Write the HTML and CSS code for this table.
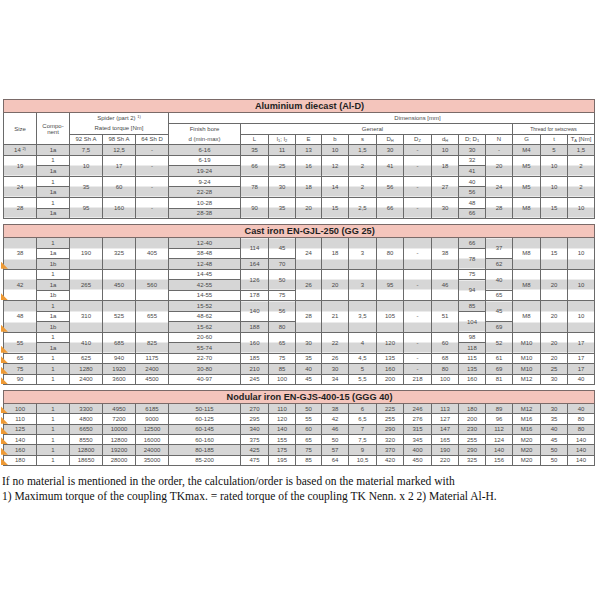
FILE: index.html
```html
<!DOCTYPE html>
<html>
<head>
<meta charset="utf-8">
<title>Coupling dimensions</title>
<link rel="stylesheet" href="styles.css">
</head>
<body>
<div class="page">
<table class="t sec-a">
<colgroup>
<col class="c33"><col class="c33"><col class="c33"><col class="c33"><col class="c33"><col class="c72"><col class="c28"><col class="c27"><col class="c26"><col class="c27"><col class="c28"><col class="c27"><col class="c28"><col class="c27"><col class="c27"><col class="c27"><col class="c28"><col class="c27"><col class="c27">
</colgroup>
<tr class="title"><td colspan="19">Aluminium diecast (Al-D)</td></tr>
<tr class="h1"><td rowspan="3">Size</td><td rowspan="3">Compo-<br>nent</td><td colspan="3" rowspan="2" class="two">Spider (part 2) <sup>1)</sup><br>Rated torque [Nm]</td><td colspan="14" class="dim">Dimensions [mm]</td></tr>
<tr class="h2"><td rowspan="2" class="two">Finish bore<br>d (min-max)</td><td colspan="10" class="gen">General</td><td colspan="3" class="thr">Thread for setscrews</td></tr>
<tr class="h3"><td>92 Sh A</td><td>98 Sh A</td><td>64 Sh D</td><td>L</td><td>l<sub>1</sub>; l<sub>2</sub></td><td>E</td><td>b</td><td>s</td><td>D<sub>H</sub></td><td>D<sub>Z</sub></td><td>d<sub>H</sub></td><td>D; D<sub>1</sub></td><td>N</td><td>G</td><td>t</td><td>T<sub>A</sub> [Nm]</td></tr>

<tr class="g"><td>14 <sup>2)</sup></td><td>1a</td><td>7,5</td><td>12,5</td><td>-</td><td>6-16</td><td>35</td><td>11</td><td>13</td><td>10</td><td>1,5</td><td>30</td><td>-</td><td>10</td><td>30</td><td>-</td><td>M4</td><td>5</td><td>1,5</td></tr>

<tr class="w"><td rowspan="2" class="wg">19</td><td>1</td><td rowspan="2" class="wg">10</td><td rowspan="2" class="wg">17</td><td rowspan="2" class="wg">-</td><td>6-19</td><td rowspan="2" class="wg">66</td><td rowspan="2" class="wg">25</td><td rowspan="2" class="wg">16</td><td rowspan="2" class="wg">12</td><td rowspan="2" class="wg">2</td><td rowspan="2" class="wg">41</td><td rowspan="2" class="wg">-</td><td rowspan="2" class="wg">18</td><td>32</td><td rowspan="2" class="wg">20</td><td rowspan="2" class="wg">M5</td><td rowspan="2" class="wg">10</td><td rowspan="2" class="wg">2</td></tr>
<tr class="g"><td>1a</td><td>19-24</td><td>41</td></tr>

<tr class="w"><td rowspan="2" class="wg">24</td><td>1</td><td rowspan="2" class="wg">35</td><td rowspan="2" class="wg">60</td><td rowspan="2" class="wg">-</td><td>9-24</td><td rowspan="2" class="wg">78</td><td rowspan="2" class="wg">30</td><td rowspan="2" class="wg">18</td><td rowspan="2" class="wg">14</td><td rowspan="2" class="wg">2</td><td rowspan="2" class="wg">56</td><td rowspan="2" class="wg">-</td><td rowspan="2" class="wg">27</td><td>40</td><td rowspan="2" class="wg">24</td><td rowspan="2" class="wg">M5</td><td rowspan="2" class="wg">10</td><td rowspan="2" class="wg">2</td></tr>
<tr class="g"><td>1a</td><td>22-28</td><td>56</td></tr>

<tr class="w"><td rowspan="2" class="wg">28</td><td>1</td><td rowspan="2" class="wg">95</td><td rowspan="2" class="wg">160</td><td rowspan="2" class="wg">-</td><td>10-28</td><td rowspan="2" class="wg">90</td><td rowspan="2" class="wg">35</td><td rowspan="2" class="wg">20</td><td rowspan="2" class="wg">15</td><td rowspan="2" class="wg">2,5</td><td rowspan="2" class="wg">66</td><td rowspan="2" class="wg">-</td><td rowspan="2" class="wg">30</td><td>48</td><td rowspan="2" class="wg">28</td><td rowspan="2" class="wg">M8</td><td rowspan="2" class="wg">15</td><td rowspan="2" class="wg">10</td></tr>
<tr class="g"><td>1a</td><td>28-38</td><td>66</td></tr>
</table>

<table class="t sec-c">
<colgroup>
<col class="c33"><col class="c33"><col class="c33"><col class="c33"><col class="c33"><col class="c72"><col class="c28"><col class="c27"><col class="c26"><col class="c27"><col class="c28"><col class="c27"><col class="c28"><col class="c27"><col class="c27"><col class="c27"><col class="c28"><col class="c27"><col class="c27">
</colgroup>
<tr class="title"><td colspan="19">Cast iron EN-GJL-250 (GG 25)</td></tr>

<tr class="g"><td rowspan="3" class="gwg mk">38</td><td>1</td><td rowspan="3" class="gwg">190</td><td rowspan="3" class="gwg">325</td><td rowspan="3" class="gwg">405</td><td>12-40</td><td rowspan="2" class="gw">114</td><td rowspan="2" class="gw">45</td><td rowspan="3" class="gwg">24</td><td rowspan="3" class="gwg">18</td><td rowspan="3" class="gwg">3</td><td rowspan="3" class="gwg">80</td><td rowspan="3" class="gwg">-</td><td rowspan="3" class="gwg">38</td><td>66</td><td rowspan="2" class="gw">37</td><td rowspan="3" class="gwg">M8</td><td rowspan="3" class="gwg">15</td><td rowspan="3" class="gwg">10</td></tr>
<tr class="w"><td>1a</td><td>38-48</td><td rowspan="2" class="wg">78</td></tr>
<tr class="g"><td>1b</td><td>12-48</td><td>164</td><td>70</td><td>62</td></tr>

<tr class="w"><td rowspan="3" class="wgw mk">42</td><td>1</td><td rowspan="3" class="wgw">265</td><td rowspan="3" class="wgw">450</td><td rowspan="3" class="wgw">560</td><td>14-45</td><td rowspan="2" class="wg">126</td><td rowspan="2" class="wg">50</td><td rowspan="3" class="wgw">26</td><td rowspan="3" class="wgw">20</td><td rowspan="3" class="wgw">3</td><td rowspan="3" class="wgw">95</td><td rowspan="3" class="wgw">-</td><td rowspan="3" class="wgw">46</td><td>75</td><td rowspan="2" class="wg">40</td><td rowspan="3" class="wgw">M8</td><td rowspan="3" class="wgw">20</td><td rowspan="3" class="wgw">10</td></tr>
<tr class="g"><td>1a</td><td>42-55</td><td rowspan="2" class="gw">94</td></tr>
<tr class="w"><td>1b</td><td>14-55</td><td>178</td><td>75</td><td>65</td></tr>

<tr class="g"><td rowspan="3" class="gwg mk">48</td><td>1</td><td rowspan="3" class="gwg">310</td><td rowspan="3" class="gwg">525</td><td rowspan="3" class="gwg">655</td><td>15-52</td><td rowspan="2" class="gw">140</td><td rowspan="2" class="gw">56</td><td rowspan="3" class="gwg">28</td><td rowspan="3" class="gwg">21</td><td rowspan="3" class="gwg">3,5</td><td rowspan="3" class="gwg">105</td><td rowspan="3" class="gwg">-</td><td rowspan="3" class="gwg">51</td><td>85</td><td rowspan="2" class="gw">45</td><td rowspan="3" class="gwg">M8</td><td rowspan="3" class="gwg">20</td><td rowspan="3" class="gwg">10</td></tr>
<tr class="w"><td>1a</td><td>48-62</td><td rowspan="2" class="wg">104</td></tr>
<tr class="g"><td>1b</td><td>15-62</td><td>188</td><td>80</td><td>69</td></tr>

<tr class="w"><td rowspan="2" class="wg mk">55</td><td>1</td><td rowspan="2" class="wg">410</td><td rowspan="2" class="wg">685</td><td rowspan="2" class="wg">825</td><td>20-60</td><td rowspan="2" class="wg">160</td><td rowspan="2" class="wg">65</td><td rowspan="2" class="wg">30</td><td rowspan="2" class="wg">22</td><td rowspan="2" class="wg">4</td><td rowspan="2" class="wg">120</td><td rowspan="2" class="wg">-</td><td rowspan="2" class="wg">60</td><td>98</td><td rowspan="2" class="wg">52</td><td rowspan="2" class="wg">M10</td><td rowspan="2" class="wg">20</td><td rowspan="2" class="wg">17</td></tr>
<tr class="g"><td>1a</td><td>55-74</td><td>118</td></tr>

<tr class="w"><td class="mk">65</td><td>1</td><td>625</td><td>940</td><td>1175</td><td>22-70</td><td>185</td><td>75</td><td>35</td><td>26</td><td>4,5</td><td>135</td><td>-</td><td>68</td><td>115</td><td>61</td><td>M10</td><td>20</td><td>17</td></tr>
<tr class="g"><td class="mk">75</td><td>1</td><td>1280</td><td>1920</td><td>2400</td><td>30-80</td><td>210</td><td>85</td><td>40</td><td>30</td><td>5</td><td>160</td><td>-</td><td>80</td><td>135</td><td>69</td><td>M10</td><td>25</td><td>17</td></tr>
<tr class="w"><td class="mk">90</td><td>1</td><td>2400</td><td>3600</td><td>4500</td><td>40-97</td><td>245</td><td>100</td><td>45</td><td>34</td><td>5,5</td><td>200</td><td>218</td><td>100</td><td>160</td><td>81</td><td>M12</td><td>30</td><td>40</td></tr>
</table>

<table class="t sec-n">
<colgroup>
<col class="c33"><col class="c33"><col class="c33"><col class="c33"><col class="c33"><col class="c72"><col class="c28"><col class="c27"><col class="c26"><col class="c27"><col class="c28"><col class="c27"><col class="c28"><col class="c27"><col class="c27"><col class="c27"><col class="c28"><col class="c27"><col class="c27">
</colgroup>
<tr class="title"><td colspan="19">Nodular iron EN-GJS-400-15 (GGG 40)</td></tr>
<tr class="g"><td class="mk">100</td><td>1</td><td>3300</td><td>4950</td><td>6185</td><td>50-115</td><td>270</td><td>110</td><td>50</td><td>38</td><td>6</td><td>225</td><td>246</td><td>113</td><td>180</td><td>89</td><td>M12</td><td>30</td><td>40</td></tr>
<tr class="w"><td class="mk">110</td><td>1</td><td>4800</td><td>7200</td><td>9000</td><td>60-125</td><td>295</td><td>120</td><td>55</td><td>42</td><td>6,5</td><td>255</td><td>276</td><td>127</td><td>200</td><td>96</td><td>M16</td><td>35</td><td>80</td></tr>
<tr class="g"><td class="mk">125</td><td>1</td><td>6650</td><td>10000</td><td>12500</td><td>60-145</td><td>340</td><td>140</td><td>60</td><td>46</td><td>7</td><td>290</td><td>315</td><td>147</td><td>230</td><td>112</td><td>M16</td><td>40</td><td>80</td></tr>
<tr class="w"><td class="mk">140</td><td>1</td><td>8550</td><td>12800</td><td>16000</td><td>60-160</td><td>375</td><td>155</td><td>65</td><td>50</td><td>7,5</td><td>320</td><td>345</td><td>165</td><td>255</td><td>124</td><td>M20</td><td>45</td><td>140</td></tr>
<tr class="g"><td class="mk">160</td><td>1</td><td>12800</td><td>19200</td><td>24000</td><td>80-185</td><td>425</td><td>175</td><td>75</td><td>57</td><td>9</td><td>370</td><td>400</td><td>190</td><td>290</td><td>140</td><td>M20</td><td>50</td><td>140</td></tr>
<tr class="w"><td class="mk">180</td><td>1</td><td>18650</td><td>28000</td><td>35000</td><td>85-200</td><td>475</td><td>195</td><td>85</td><td>64</td><td>10,5</td><td>420</td><td>450</td><td>220</td><td>325</td><td>156</td><td>M20</td><td>50</td><td>140</td></tr>
</table>
</div>
<p class="note">If no material is mentioned in the order, the calculation/order is based on the material marked with<br>1) Maximum torque of the coupling TKmax. = rated torque of the coupling TK Nenn. x 2 2) Material Al-H.</p>
</body>
</html>
```

FILE: styles.css
```css
html, body {
  margin: 0;
  padding: 0;
  background: #ffffff;
}

body {
  font-family: "Liberation Serif", "Times New Roman", serif;
  color: #000;
}

.page {
  padding: 99px 0 0 3px;
}

.t {
  border-collapse: collapse;
  table-layout: fixed;
  width: 592px;
  font-family: "Liberation Sans", Arial, sans-serif;
  font-size: 6px;
  color: #484848;
  margin: 0 0 5px 0;
}

.c33 { width: 33px; }
.c72 { width: 72px; }
.c28 { width: 28px; }
.c27 { width: 27px; }
.c26 { width: 26px; }

.t td {
  border: 1px solid #6a6a6a;
  padding: 0;
  text-align: center;
  vertical-align: middle;
  line-height: 6px;
  white-space: nowrap;
  background: #ffffff;
}

.t sup, .t sub {
  font-size: 4px;
  line-height: 0;
}

.t sub {
  vertical-align: -1px;
}

.t sup {
  vertical-align: 2px;
}

.t tr.title { height: 13px; }

.t tr.title td {
  background: #f4c5bc;
  border-color: #7a6a68;
  color: #1f1f1f;
  font-weight: bold;
  font-size: 9.2px;
  line-height: 10px;
  padding-left: 21px;
}

.t tr.h1 { height: 11px; }
.t tr.h2 { height: 10px; }
.t tr.h3 { height: 10px; }

.t td.two {
  line-height: 10px;
}

.t td.dim {
  padding-left: 72px;
}

.t td.gen {
  padding-right: 8px;
}

.t td.thr {
  font-size: 5px;
}

.sec-a tr.g, .sec-a tr.w { height: 10.6px; }
.sec-c tr.g, .sec-c tr.w { height: 10.5px; }
.sec-n tr.g, .sec-n tr.w { height: 10.3px; }

.t tr.g td { background: #d6d6d6; }
.t tr.w td { background: #ffffff; }

.t tr td.wg { background: linear-gradient(#ffffff 50%, #d6d6d6 50%); }
.t tr td.gw { background: linear-gradient(#d6d6d6 50%, #ffffff 50%); }
.t tr td.gwg { background: linear-gradient(#d6d6d6 33.333%, #ffffff 33.333%, #ffffff 66.667%, #d6d6d6 66.667%); }
.t tr td.wgw { background: linear-gradient(#ffffff 33.333%, #d6d6d6 33.333%, #d6d6d6 66.667%, #ffffff 66.667%); }

.t td.mk {
  position: relative;
}

.t td.mk::before {
  content: "";
  position: absolute;
  left: -3px;
  bottom: 0;
  width: 7px;
  height: 7px;
  background: #ee9a35;
  clip-path: polygon(0 0, 0 100%, 100% 100%);
}

.note {
  margin: 8px 0 0 2px;
  font-size: 11.5px;
  line-height: 15px;
  color: #111;
}
```
